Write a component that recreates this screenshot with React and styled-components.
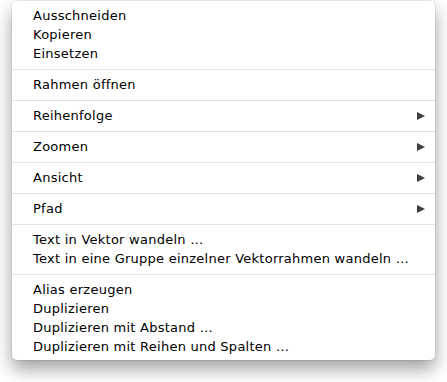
import React from 'react'
import styled, { createGlobalStyle } from 'styled-components'

const GlobalStyle = createGlobalStyle`
  html, body {
    margin: 0;
    padding: 0;
    background: #fff;
  }
  body {
    font-family: "DejaVu Sans", "Noto Sans", sans-serif;
  }
`

const Page = styled.div`
  width: 447px;
  height: 382px;
  padding: 1px 12px 0;
  box-sizing: border-box;
`

const Menu = styled.div`
  width: 423px;
  background: #fff;
  border-radius: 5px;
  box-shadow: 0 0 0 1px rgba(0, 0, 0, 0.06), 0 9px 18px rgba(0, 0, 0, 0.38);
  overflow: hidden;
`

const Group = styled.div`
  padding: ${p => (p.last ? '5px 0 4px' : '5px 0 6px')};
  border-bottom: ${p => (p.last ? 'none' : '1px solid #e2e2e2')};
`

const Item = styled.div`
  display: flex;
  align-items: center;
  justify-content: space-between;
  height: 19px;
  padding: 0 10px 0 21px;
  font-size: 13px;
  letter-spacing: 0.25px;
  color: #000;
  white-space: nowrap;
`

const Arrow = styled.span`
  width: 0;
  height: 0;
  border-top: 4.5px solid transparent;
  border-bottom: 4.5px solid transparent;
  border-left: 8px solid #3f3f3f;
`

const groups = [
  { items: ['Ausschneiden', 'Kopieren', 'Einsetzen'] },
  { items: ['Rahmen öffnen'] },
  { items: ['Reihenfolge'], sub: true },
  { items: ['Zoomen'], sub: true },
  { items: ['Ansicht'], sub: true },
  { items: ['Pfad'], sub: true },
  {
    items: [
      'Text in Vektor wandeln …',
      'Text in eine Gruppe einzelner Vektorrahmen wandeln …',
    ],
  },
  {
    items: [
      'Alias erzeugen',
      'Duplizieren',
      'Duplizieren mit Abstand …',
      'Duplizieren mit Reihen und Spalten …',
    ],
  },
]

const App = () => (
  <Page>
    <GlobalStyle />
    <Menu>
      {groups.map((g, i) => (
        <Group key={i} last={i === groups.length - 1}>
          {g.items.map(label => (
            <Item key={label}>
              <span>{label}</span>
              {g.sub && <Arrow />}
            </Item>
          ))}
        </Group>
      ))}
    </Menu>
  </Page>
)

export default App
